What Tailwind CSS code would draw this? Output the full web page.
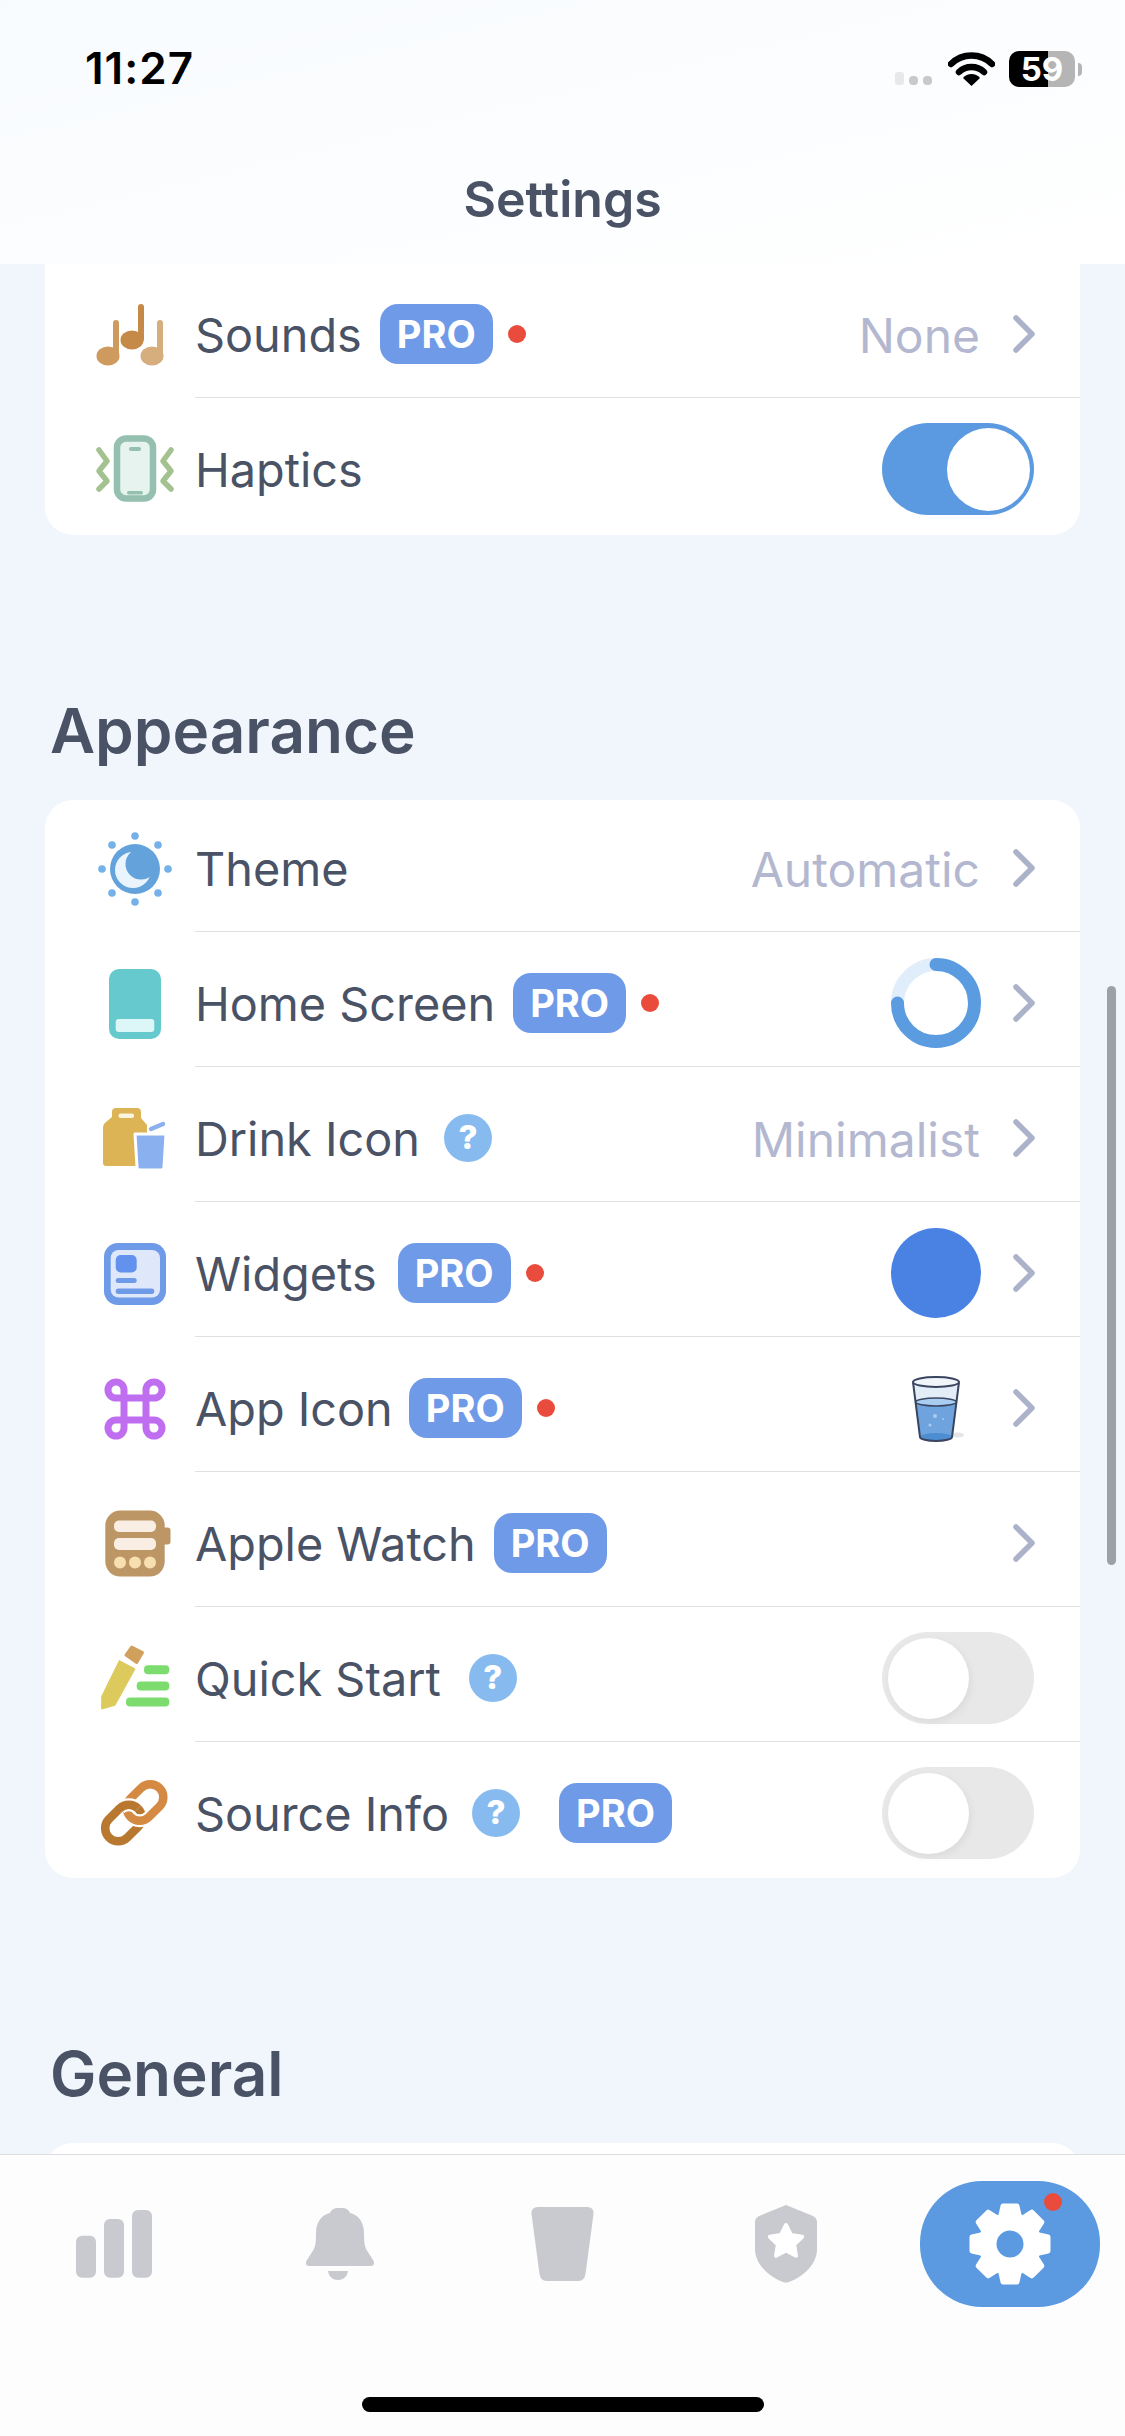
<!DOCTYPE html>
<html lang="en">
<head>
  <meta charset="UTF-8">
  <meta name="viewport" content="width=device-width, initial-scale=1.0">
  <script src="https://cdn.jsdelivr.net/npm/@tailwindcss/browser@4"></script>
  <title>Settings</title>
</head>
<body class="bg-[#f1f6fd]">
<div class="w-[1125px] h-[2436px] flex flex-col overflow-hidden font-[Inter,sans-serif] text-[#4a5265]">

  <!-- status bar + title -->
  <header class="h-[264px] shrink-0 bg-gradient-to-br from-[#f8fbfe] to-white">
    <div class="h-[171px] flex justify-between pl-[85px] pr-[43px] pt-[45px]">
      <span class="text-[44px] leading-[46px] font-semibold text-black tracking-[1px]">11:27</span>
      <div class="flex items-start pt-[6px]">
        <svg class="w-[56px] h-[36px] mt-0" viewBox="0 0 56 36">
          <rect x="16" y="21" width="9" height="13" rx="3" fill="#e8e8e8"/>
          <rect x="30" y="25" width="9" height="9" rx="4" fill="#c9c9c9"/>
          <rect x="44" y="25" width="9" height="9" rx="4" fill="#c9c9c9"/>
        </svg>
        <svg class="w-[47px] h-[36px] ml-[13px]" viewBox="0 0 47 36">
          <path d="M3 13 a29 29 0 0 1 41 0" fill="none" stroke="#000" stroke-width="6.500" stroke-linecap="round"/>
          <path d="M11 21 a18 18 0 0 1 25 0" fill="none" stroke="#000" stroke-width="6.500" stroke-linecap="round"/>
          <path d="M15 27 a11 11 0 0 1 17 0 l-8.500 8 z" fill="#000"/>
        </svg>
        <div class="w-[66px] h-[36px] ml-[14px] rounded-[10px] bg-[linear-gradient(90deg,#000_59%,#b5b5b5_59%)] flex items-center justify-center text-white font-bold text-[33px] leading-none">59</div>
        <div class="w-[4px] h-[13px] ml-[3px] mt-[12px] rounded-r-full bg-[#b5b5b5]"></div>
      </div>
    </div>
    <h1 class="text-[50px] leading-[56px] font-semibold text-center">Settings</h1>
  </header>

  <main class="relative flex-1 overflow-hidden">
    <div class="absolute left-[1107px] top-[722px] w-[9px] h-[579px] rounded-full bg-[#9ca1a8]"></div>

    <!-- sound card -->
    <section class="mx-[45px] bg-white rounded-b-[28px]">
      <div class="flex h-[134px] pl-[45px]">
        <div class="w-[90px] pt-[7px] flex items-center">
          <svg class="w-[90px] h-[90px]" viewBox="0 0 90 90">
            <g fill="#cf9a5e"><rect x="23" y="30" width="6" height="38" rx="3"/><ellipse cx="18" cy="66" rx="11.500" ry="9.500"/></g>
            <g fill="#c68a48"><rect x="48" y="14" width="6" height="38" rx="3"/><ellipse cx="42" cy="50" rx="11.500" ry="9.500"/></g>
            <g fill="#d6ad7c"><rect x="67" y="30" width="6" height="38" rx="3"/><ellipse cx="62" cy="66" rx="11.500" ry="9.500"/></g>
          </svg>
        </div>
        <div class="flex-1 ml-[15px] pr-[45px] pt-[7px] flex items-center border-b border-[#dfe0e4]">
          <span class="text-[46.800px] mt-[3px]">Sounds</span>
          <span class="ml-[18px] w-[113px] h-[60px] rounded-[18px] bg-[#6f9ae8] text-white font-bold text-[38px] flex items-center justify-center">PRO</span>
          <span class="ml-[15px] w-[18px] h-[18px] rounded-full bg-[#e94b3c]"></span>
          <span class="ml-auto text-[48px] mt-[3px] text-[#b3b8d0]">None</span>
          <svg class="ml-[33px] w-[22px] h-[38px]" viewBox="0 0 22 38"><polyline points="3,3 19,19 3,35" fill="none" stroke="#adb2cb" stroke-width="5.500" stroke-linecap="round" stroke-linejoin="round"/></svg>
        </div>
      </div>
      <div class="flex h-[137px] pl-[45px]">
        <div class="w-[90px] pt-[5px] flex items-center">
          <svg class="w-[90px] h-[90px]" viewBox="0 0 90 90">
            <rect x="27" y="14.500" width="36" height="60" rx="9" fill="#e6f3ef" stroke="#95bfae" stroke-width="6.500"/>
            <rect x="39" y="23" width="12" height="4" rx="2" fill="#95bfae"/>
            <rect x="37" y="67" width="16" height="3.500" rx="1.750" fill="#95bfae"/>
            <polyline points="9,26 17,37 9,47 17,57 9,65" fill="none" stroke="#a3c28f" stroke-width="5.500" stroke-linecap="round" stroke-linejoin="round"/>
            <polyline points="81,26 73,37 81,47 73,57 81,65" fill="none" stroke="#a3c28f" stroke-width="5.500" stroke-linecap="round" stroke-linejoin="round"/>
          </svg>
        </div>
        <div class="flex-1 ml-[15px] pr-[46px] pt-[5px] flex items-center">
          <span class="text-[46.800px] mt-[3px]">Haptics</span>
          <div class="ml-auto w-[152px] h-[92px] rounded-full bg-[#5b9ae0] flex items-center justify-end pr-[4px]">
            <div class="w-[83px] h-[83px] rounded-full bg-white"></div>
          </div>
        </div>
      </div>
    </section>

    <div class="h-[265px] flex items-end pl-[50px] pb-[41px]">
      <h2 class="text-[62px] leading-[56px] font-semibold">Appearance</h2>
    </div>

    <!-- appearance card -->
    <section class="mx-[45px] bg-white rounded-[28px]">
      <!-- theme -->
      <div class="flex h-[132px] pl-[45px]">
        <div class="w-[90px] pt-[5px] flex items-center">
          <svg class="w-[90px] h-[90px]" viewBox="0 0 90 90">
            <g fill="#74b1e8">
              <circle cx="45" cy="12" r="3.800"/><circle cx="45" cy="78" r="3.800"/><circle cx="12" cy="45" r="3.800"/><circle cx="78" cy="45" r="3.800"/>
              <circle cx="22" cy="21" r="3.800"/><circle cx="68" cy="21" r="3.800"/><circle cx="22" cy="69" r="3.800"/><circle cx="68" cy="69" r="3.800"/>
            </g>
            <circle cx="45" cy="45" r="25" fill="#64a2dc"/>
            <circle cx="43" cy="46" r="18" fill="#eaf4fd"/>
            <circle cx="51" cy="40" r="15.500" fill="#64a2dc"/>
          </svg>
        </div>
        <div class="flex-1 ml-[15px] pr-[45px] pt-[5px] flex items-center border-b border-[#dfe0e4]">
          <span class="text-[46.800px] mt-[3px]">Theme</span>
          <span class="ml-auto text-[48px] mt-[3px] text-[#b3b8d0]">Automatic</span>
          <svg class="ml-[33px] w-[22px] h-[38px]" viewBox="0 0 22 38"><polyline points="3,3 19,19 3,35" fill="none" stroke="#adb2cb" stroke-width="5.500" stroke-linecap="round" stroke-linejoin="round"/></svg>
        </div>
      </div>
      <!-- home screen -->
      <div class="flex h-[135px] pl-[45px]">
        <div class="w-[90px] pt-2 flex items-center">
          <svg class="w-[90px] h-[90px]" viewBox="0 0 90 90">
            <rect x="19" y="10" width="52" height="70" rx="10" fill="#66c9cd"/>
            <rect x="25.700" y="60" width="38.600" height="13" rx="3" fill="#ddf6f7"/>
          </svg>
        </div>
        <div class="flex-1 ml-[15px] pr-[45px] pt-2 flex items-center border-b border-[#dfe0e4]">
          <span class="text-[46.800px] mt-[3px]">Home Screen</span>
          <span class="ml-[18px] w-[113px] h-[60px] rounded-[18px] bg-[#6f9ae8] text-white font-bold text-[38px] flex items-center justify-center">PRO</span>
          <span class="ml-[15px] w-[18px] h-[18px] rounded-full bg-[#e94b3c]"></span>
          <svg class="ml-auto w-[90px] h-[90px]" viewBox="0 0 90 90">
            <circle cx="45" cy="45" r="38.500" fill="none" stroke="#e0edfb" stroke-width="13"/>
            <path d="M45 6.500 A38.500 38.500 0 1 1 6.500 45" fill="none" stroke="#5b9ce0" stroke-width="13" stroke-linecap="round"/>
          </svg>
          <svg class="ml-[32px] w-[22px] h-[38px]" viewBox="0 0 22 38"><polyline points="3,3 19,19 3,35" fill="none" stroke="#adb2cb" stroke-width="5.500" stroke-linecap="round" stroke-linejoin="round"/></svg>
        </div>
      </div>
      <!-- drink icon -->
      <div class="flex h-[135px] pl-[45px]">
        <div class="w-[90px] pt-2 flex items-center">
          <svg class="w-[90px] h-[90px]" viewBox="0 0 90 90">
            <path d="M22 18 q0 -4 4 -4 h21 q4 0 4 4 v6 l6 7 v41 h-41 q-3 0 -3 -3 v-36 q0 -3 3 -5 l6 -5 z" fill="#dcb455"/>
            <rect x="28.500" y="19.500" width="15.500" height="4.500" rx="2" fill="#fbf4df"/>
            <path d="M61 35 L73 30" stroke="#8bb0f0" stroke-width="4.500" stroke-linecap="round"/>
            <path d="M45 40 h31 l-2 33 q0 3 -3 3 h-21 q-3 0 -3 -3 z" fill="#8bb0f0" stroke="#fff" stroke-width="3" stroke-linejoin="round"/>
          </svg>
        </div>
        <div class="flex-1 ml-[15px] pr-[45px] pt-2 flex items-center border-b border-[#dfe0e4]">
          <span class="text-[46.800px] mt-[3px]">Drink Icon</span>
          <span class="ml-[24px] w-[48px] h-[48px] rounded-full bg-[#87bbef] text-white font-extrabold text-[33px] flex items-center justify-center">?</span>
          <span class="ml-auto text-[48px] mt-[3px] text-[#b3b8d0]">Minimalist</span>
          <svg class="ml-[33px] w-[22px] h-[38px]" viewBox="0 0 22 38"><polyline points="3,3 19,19 3,35" fill="none" stroke="#adb2cb" stroke-width="5.500" stroke-linecap="round" stroke-linejoin="round"/></svg>
        </div>
      </div>
      <!-- widgets -->
      <div class="flex h-[135px] pl-[45px]">
        <div class="w-[90px] pt-2 flex items-center">
          <svg class="w-[90px] h-[90px]" viewBox="0 0 90 90">
            <rect x="14" y="14" width="62" height="62" rx="14" fill="#6e9ae8"/>
            <rect x="20.700" y="21" width="49.300" height="47.500" rx="8" fill="#dfe7fa"/>
            <rect x="25.700" y="26" width="21" height="17.500" rx="5" fill="#6292ee"/>
            <rect x="25.700" y="49" width="21" height="5" rx="2.500" fill="#6e9ae8"/>
            <rect x="25.700" y="59.500" width="38.600" height="5.500" rx="2.700" fill="#6e9ae8"/>
          </svg>
        </div>
        <div class="flex-1 ml-[15px] pr-[45px] pt-2 flex items-center border-b border-[#dfe0e4]">
          <span class="text-[46.800px] mt-[3px]">Widgets</span>
          <span class="ml-[21px] w-[113px] h-[60px] rounded-[18px] bg-[#6f9ae8] text-white font-bold text-[38px] flex items-center justify-center">PRO</span>
          <span class="ml-[15px] w-[18px] h-[18px] rounded-full bg-[#e94b3c]"></span>
          <div class="ml-auto w-[90px] h-[90px] rounded-full bg-[#4a82e4]"></div>
          <svg class="ml-[32px] w-[22px] h-[38px]" viewBox="0 0 22 38"><polyline points="3,3 19,19 3,35" fill="none" stroke="#adb2cb" stroke-width="5.500" stroke-linecap="round" stroke-linejoin="round"/></svg>
        </div>
      </div>
      <!-- app icon -->
      <div class="flex h-[135px] pl-[45px]">
        <div class="w-[90px] pt-2 flex items-center">
          <svg class="w-[90px] h-[90px]" viewBox="0 0 90 90">
            <path d="M34 26 V64 a8 8 0 1 1 -8 -8 H64 a8 8 0 1 1 -8 8 V26 a8 8 0 1 1 8 8 H26 a8 8 0 1 1 8 -8 z" fill="none" stroke="#c06ef0" stroke-width="7" stroke-linejoin="round"/>
          </svg>
        </div>
        <div class="flex-1 ml-[15px] pr-[45px] pt-2 flex items-center border-b border-[#dfe0e4]">
          <span class="text-[46.800px] mt-[3px]">App Icon</span>
          <span class="ml-[16px] w-[113px] h-[60px] rounded-[18px] bg-[#6f9ae8] text-white font-bold text-[38px] flex items-center justify-center">PRO</span>
          <span class="ml-[15px] w-[18px] h-[18px] rounded-full bg-[#e94b3c]"></span>
          <svg class="ml-auto w-[90px] h-[90px]" viewBox="0 0 90 90">
            <ellipse cx="67" cy="72" rx="6" ry="2.500" fill="#e5e5e5"/>
            <path d="M22 19 L29 74 A16 4 0 0 0 61 74 L68 19 Z" fill="#e3edf7"/>
            <path d="M24 39 L29 74 A16 4 0 0 0 61 74 L66 39 Z" fill="#6fa3dd"/>
            <ellipse cx="45" cy="39" rx="20.500" ry="4" fill="#a9cdf0"/>
            <ellipse cx="45" cy="74" rx="16" ry="4" fill="#4d8ed2"/>
            <circle cx="44" cy="53" r="2" fill="#a9cdf0"/><circle cx="52" cy="56" r="1" fill="#a9cdf0"/><circle cx="39" cy="62" r="1.500" fill="#a9cdf0"/>
            <ellipse cx="45" cy="39" rx="20.500" ry="4" fill="none" stroke="#3a4660" stroke-width="1.500"/>
            <path d="M22 19 L29 74 A16 4 0 0 0 61 74 L68 19" fill="none" stroke="#3a4660" stroke-width="2"/>
            <ellipse cx="45" cy="19" rx="23" ry="5" fill="#f0f5fa" stroke="#3a4660" stroke-width="2"/>
          </svg>
          <svg class="ml-[32px] w-[22px] h-[38px]" viewBox="0 0 22 38"><polyline points="3,3 19,19 3,35" fill="none" stroke="#adb2cb" stroke-width="5.500" stroke-linecap="round" stroke-linejoin="round"/></svg>
        </div>
      </div>
      <!-- apple watch -->
      <div class="flex h-[135px] pl-[45px]">
        <div class="w-[90px] pt-2 flex items-center">
          <svg class="w-[90px] h-[90px]" viewBox="0 0 90 90">
            <rect x="70" y="28.500" width="10.500" height="17" rx="3" fill="#bd9666"/>
            <rect x="15.300" y="11.600" width="59.400" height="66" rx="15" fill="#bd9666"/>
            <rect x="24" y="21.600" width="42" height="11.400" rx="5" fill="#f9eee3"/>
            <rect x="24" y="39" width="42" height="12" rx="5" fill="#f9eee3"/>
            <circle cx="30" cy="63.500" r="6" fill="#f7dfb0"/><circle cx="45" cy="63.500" r="6" fill="#f7dfb0"/><circle cx="60" cy="63.500" r="6" fill="#f7dfb0"/>
          </svg>
        </div>
        <div class="flex-1 ml-[15px] pr-[45px] pt-2 flex items-center border-b border-[#dfe0e4]">
          <span class="text-[46.800px] mt-[3px]">Apple Watch</span>
          <span class="ml-[18px] w-[113px] h-[60px] rounded-[18px] bg-[#6f9ae8] text-white font-bold text-[38px] flex items-center justify-center">PRO</span>
          <svg class="ml-auto w-[22px] h-[38px]" viewBox="0 0 22 38"><polyline points="3,3 19,19 3,35" fill="none" stroke="#adb2cb" stroke-width="5.500" stroke-linecap="round" stroke-linejoin="round"/></svg>
        </div>
      </div>
      <!-- quick start -->
      <div class="flex h-[135px] pl-[45px]">
        <div class="w-[90px] pt-2 flex items-center">
          <svg class="w-[90px] h-[90px]" viewBox="0 0 90 90">
            <path d="M29.300 26.600 L45 34.900 L25 71.300 L11.700 75 L11.700 62.400 Z" fill="#dccb5c" stroke="#dccb5c" stroke-width="1" stroke-linejoin="round"/>
            <path d="M36 21 L41.700 13 L52.500 18.600 L46.700 28.500 Z" fill="#d0a05c" stroke="#d0a05c" stroke-width="3" stroke-linejoin="round"/>
            <rect x="54" y="31.300" width="25.300" height="9" rx="4" fill="#7ddc6e"/>
            <rect x="46.700" y="47.400" width="32.600" height="9" rx="4" fill="#7ddc6e"/>
            <rect x="36" y="63.400" width="43.300" height="9" rx="4" fill="#7ddc6e"/>
          </svg>
        </div>
        <div class="flex-1 ml-[15px] pr-[46px] pt-2 flex items-center border-b border-[#dfe0e4]">
          <span class="text-[46.800px] mt-[3px]">Quick Start</span>
          <span class="ml-[28px] w-[48px] h-[48px] rounded-full bg-[#87bbef] text-white font-extrabold text-[33px] flex items-center justify-center">?</span>
          <div class="ml-auto w-[152px] h-[92px] rounded-full bg-[#e8e8e9] flex items-center pl-[6px]">
            <div class="w-[81px] h-[81px] rounded-full bg-white shadow-[2px_3px_8px_rgba(0,0,0,0.06)]"></div>
          </div>
        </div>
      </div>
      <!-- source info -->
      <div class="flex h-[136px] pl-[45px]">
        <div class="w-[90px] pt-[6px] flex items-center">
          <svg class="w-[90px] h-[90px]" viewBox="0 0 90 90">
            <g fill="none" stroke-width="8.500">
              <rect x="13" y="42" width="41" height="26" rx="13" transform="rotate(-45 33.500 55)" stroke="#b9782f"/>
              <rect x="34.500" y="21.500" width="41" height="26" rx="13" transform="rotate(-45 55 34.500)" stroke="#fff" stroke-width="13"/>
              <rect x="34.500" y="21.500" width="41" height="26" rx="13" transform="rotate(-45 55 34.500)" stroke="#d58a44"/>
              <path d="M41 42 A13 13 0 0 1 54 55" transform="rotate(-45 33.500 55)" stroke="#fff" stroke-width="13"/>
              <path d="M39 42 H41 A13 13 0 0 1 54 55" transform="rotate(-45 33.500 55)" stroke="#b9782f"/>
            </g>
          </svg>
        </div>
        <div class="flex-1 ml-[15px] pr-[46px] pt-[6px] flex items-center">
          <span class="text-[46.800px] mt-[3px]">Source Info</span>
          <span class="ml-[23px] w-[48px] h-[48px] rounded-full bg-[#87bbef] text-white font-extrabold text-[33px] flex items-center justify-center">?</span>
          <span class="ml-[39px] w-[113px] h-[60px] rounded-[18px] bg-[#6f9ae8] text-white font-bold text-[38px] flex items-center justify-center">PRO</span>
          <div class="ml-auto w-[152px] h-[92px] rounded-full bg-[#e8e8e9] flex items-center pl-[6px]">
            <div class="w-[81px] h-[81px] rounded-full bg-white shadow-[2px_3px_8px_rgba(0,0,0,0.06)]"></div>
          </div>
        </div>
      </div>
    </section>

    <div class="h-[265px] flex items-end pl-[50px] pb-[41px]">
      <h2 class="text-[62px] leading-[56px] font-semibold">General</h2>
    </div>
    <section class="mx-[45px] h-[200px] bg-white rounded-[28px]"></section>
  </main>

  <!-- tab bar -->
  <footer class="h-[282px] shrink-0 bg-[#fdfdfd] border-t border-[#dcdde0] pt-[26px]">
    <nav class="grid grid-cols-[repeat(5,224px)] pl-[2px] h-[126px]">
      <div class="flex items-center justify-center">
        <svg class="w-[90px] h-[90px]" viewBox="0 0 90 90" fill="#c8cacf">
          <rect x="7" y="36.700" width="20" height="42" rx="6"/>
          <rect x="35" y="20" width="20" height="58.700" rx="6"/>
          <rect x="63" y="11" width="20" height="67.700" rx="6"/>
        </svg>
      </div>
      <div class="flex items-center justify-center">
        <svg class="w-[90px] h-[90px]" viewBox="0 0 90 90" fill="#c8cacf">
          <path d="M45 9 c-4 0 -7 2 -8 5 c-9 2 -14 10 -14 20 c0 6 0 11 -2 16 l-7 11 c-2 3 -1 6 2 6 h62 c3 0 4 -3 2 -6 l-7 -11 c-2 -5 -2 -10 -2 -16 c0 -10 -5 -18 -14 -20 c-1 -3 -4 -5 -8 -5 z"/>
          <path d="M35 72 h20 c-1 6 -5 9 -10 9 s-9 -3 -10 -9 z"/>
        </svg>
      </div>
      <div class="flex items-center justify-center">
        <svg class="w-[90px] h-[90px]" viewBox="0 0 90 90" fill="#c8cacf">
          <path d="M21 8 h49 q7 0 6.500 7 l-8 60 q-1 7 -7 7 h-32 q-6 0 -7 -7 l-8 -60 q-.5 -7 6.500 -7 z"/>
        </svg>
      </div>
      <div class="flex items-center justify-center">
        <svg class="w-[90px] h-[90px]" viewBox="0 0 90 90">
          <path d="M45 6 L72 17 q4 2 4 6 v27 c0 14 -12 27 -28 33 q-3 1 -6 0 c-16 -6 -28 -19 -28 -33 V23 q0 -4 4 -6 z" fill="#c8cacf"/>
          <polygon points="45,26 50,36.100 61.200,37.700 53.100,45.600 55,56.800 45,51.500 35,56.800 36.900,45.600 28.800,37.700 40,36.100" fill="#fff" stroke="#fff" stroke-width="4" stroke-linejoin="round"/>
        </svg>
      </div>
      <div class="relative flex items-center justify-center">
        <div class="w-[180px] h-[126px] rounded-[62px] bg-[#5b9ae0] flex items-center justify-center">
          <svg class="w-[90px] h-[90px]" viewBox="-45 -45 90 90">
            <g fill="#fff" stroke="#fff" stroke-width="5" stroke-linejoin="round">
              <circle r="29"/>
              <polygon points="-7,-38 7,-38 11,-20 11,20 7,38 -7,38 -11,20 -11,-20"/>
              <polygon points="-7,-38 7,-38 11,-20 11,20 7,38 -7,38 -11,20 -11,-20" transform="rotate(45)"/>
              <polygon points="-7,-38 7,-38 11,-20 11,20 7,38 -7,38 -11,20 -11,-20" transform="rotate(90)"/>
              <polygon points="-7,-38 7,-38 11,-20 11,20 7,38 -7,38 -11,20 -11,-20" transform="rotate(135)"/>
            </g>
            <circle r="13.500" fill="#5b9ae0"/>
          </svg>
        </div>
        <span class="absolute left-[146px] top-[12px] w-[18px] h-[18px] rounded-full bg-[#e94b3c]"></span>
      </div>
    </nav>
    <div class="mt-[90px] mx-auto w-[402px] h-[15px] rounded-full bg-black"></div>
  </footer>
</div>
</body>
</html>
